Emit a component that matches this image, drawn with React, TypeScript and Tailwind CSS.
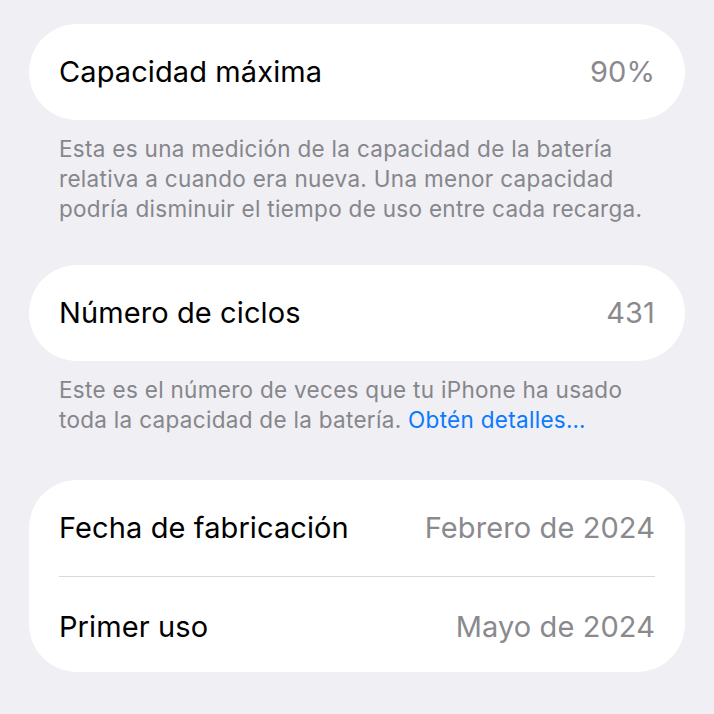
const FONT = "font-['Inter','Noto_Sans',sans-serif]";

type Row = { label: string; value: string };

function Card({ rows }: { rows: Row[] }) {
  return (
    <div className="mx-[29px] rounded-[48px] bg-white px-[30px]">
      {rows.map((r, i) => (
        <div
          key={r.label}
          className={`flex h-[96px] items-center justify-between ${i > 0 ? "border-t border-[#d9d9dd] pt-[4px]" : ""}`}
        >
          <span className="text-[29px] tracking-[0.1px] text-black">{r.label}</span>
          <span className="text-[29px] tracking-[0.1px] text-[#8a8a8e]">{r.value}</span>
        </div>
      ))}
    </div>
  );
}

function Footnote({ children, className = "" }: { children: React.ReactNode; className?: string }) {
  return (
    <p
      className={`whitespace-nowrap px-[59px] pt-[14px] text-[22.5px] leading-[30px] tracking-[0.3px] text-[#86868b] ${className}`}
    >
      {children}
    </p>
  );
}

export default function App() {
  return (
    <div className={`min-h-[714px] w-[714px] bg-[#efeff4] pt-[24px] ${FONT}`}>
      <Card rows={[{ label: "Capacidad máxima", value: "90%" }]} />
      <Footnote className="pb-[41px]">
        Esta es una medición de la capacidad de la batería
        <br />
        relativa a cuando era nueva. Una menor capacidad
        <br />
        podría disminuir el tiempo de uso entre cada recarga.
      </Footnote>

      <Card rows={[{ label: "Número de ciclos", value: "431" }]} />
      <Footnote className="pb-[45px]">
        Este es el número de veces que tu iPhone ha usado
        <br />
        toda la capacidad de la batería.{" "}
        <span className="text-[#0a7aff]">Obtén detalles…</span>
      </Footnote>

      <Card
        rows={[
          { label: "Fecha de fabricación", value: "Febrero de 2024" },
          { label: "Primer uso", value: "Mayo de 2024" },
        ]}
      />
    </div>
  );
}
